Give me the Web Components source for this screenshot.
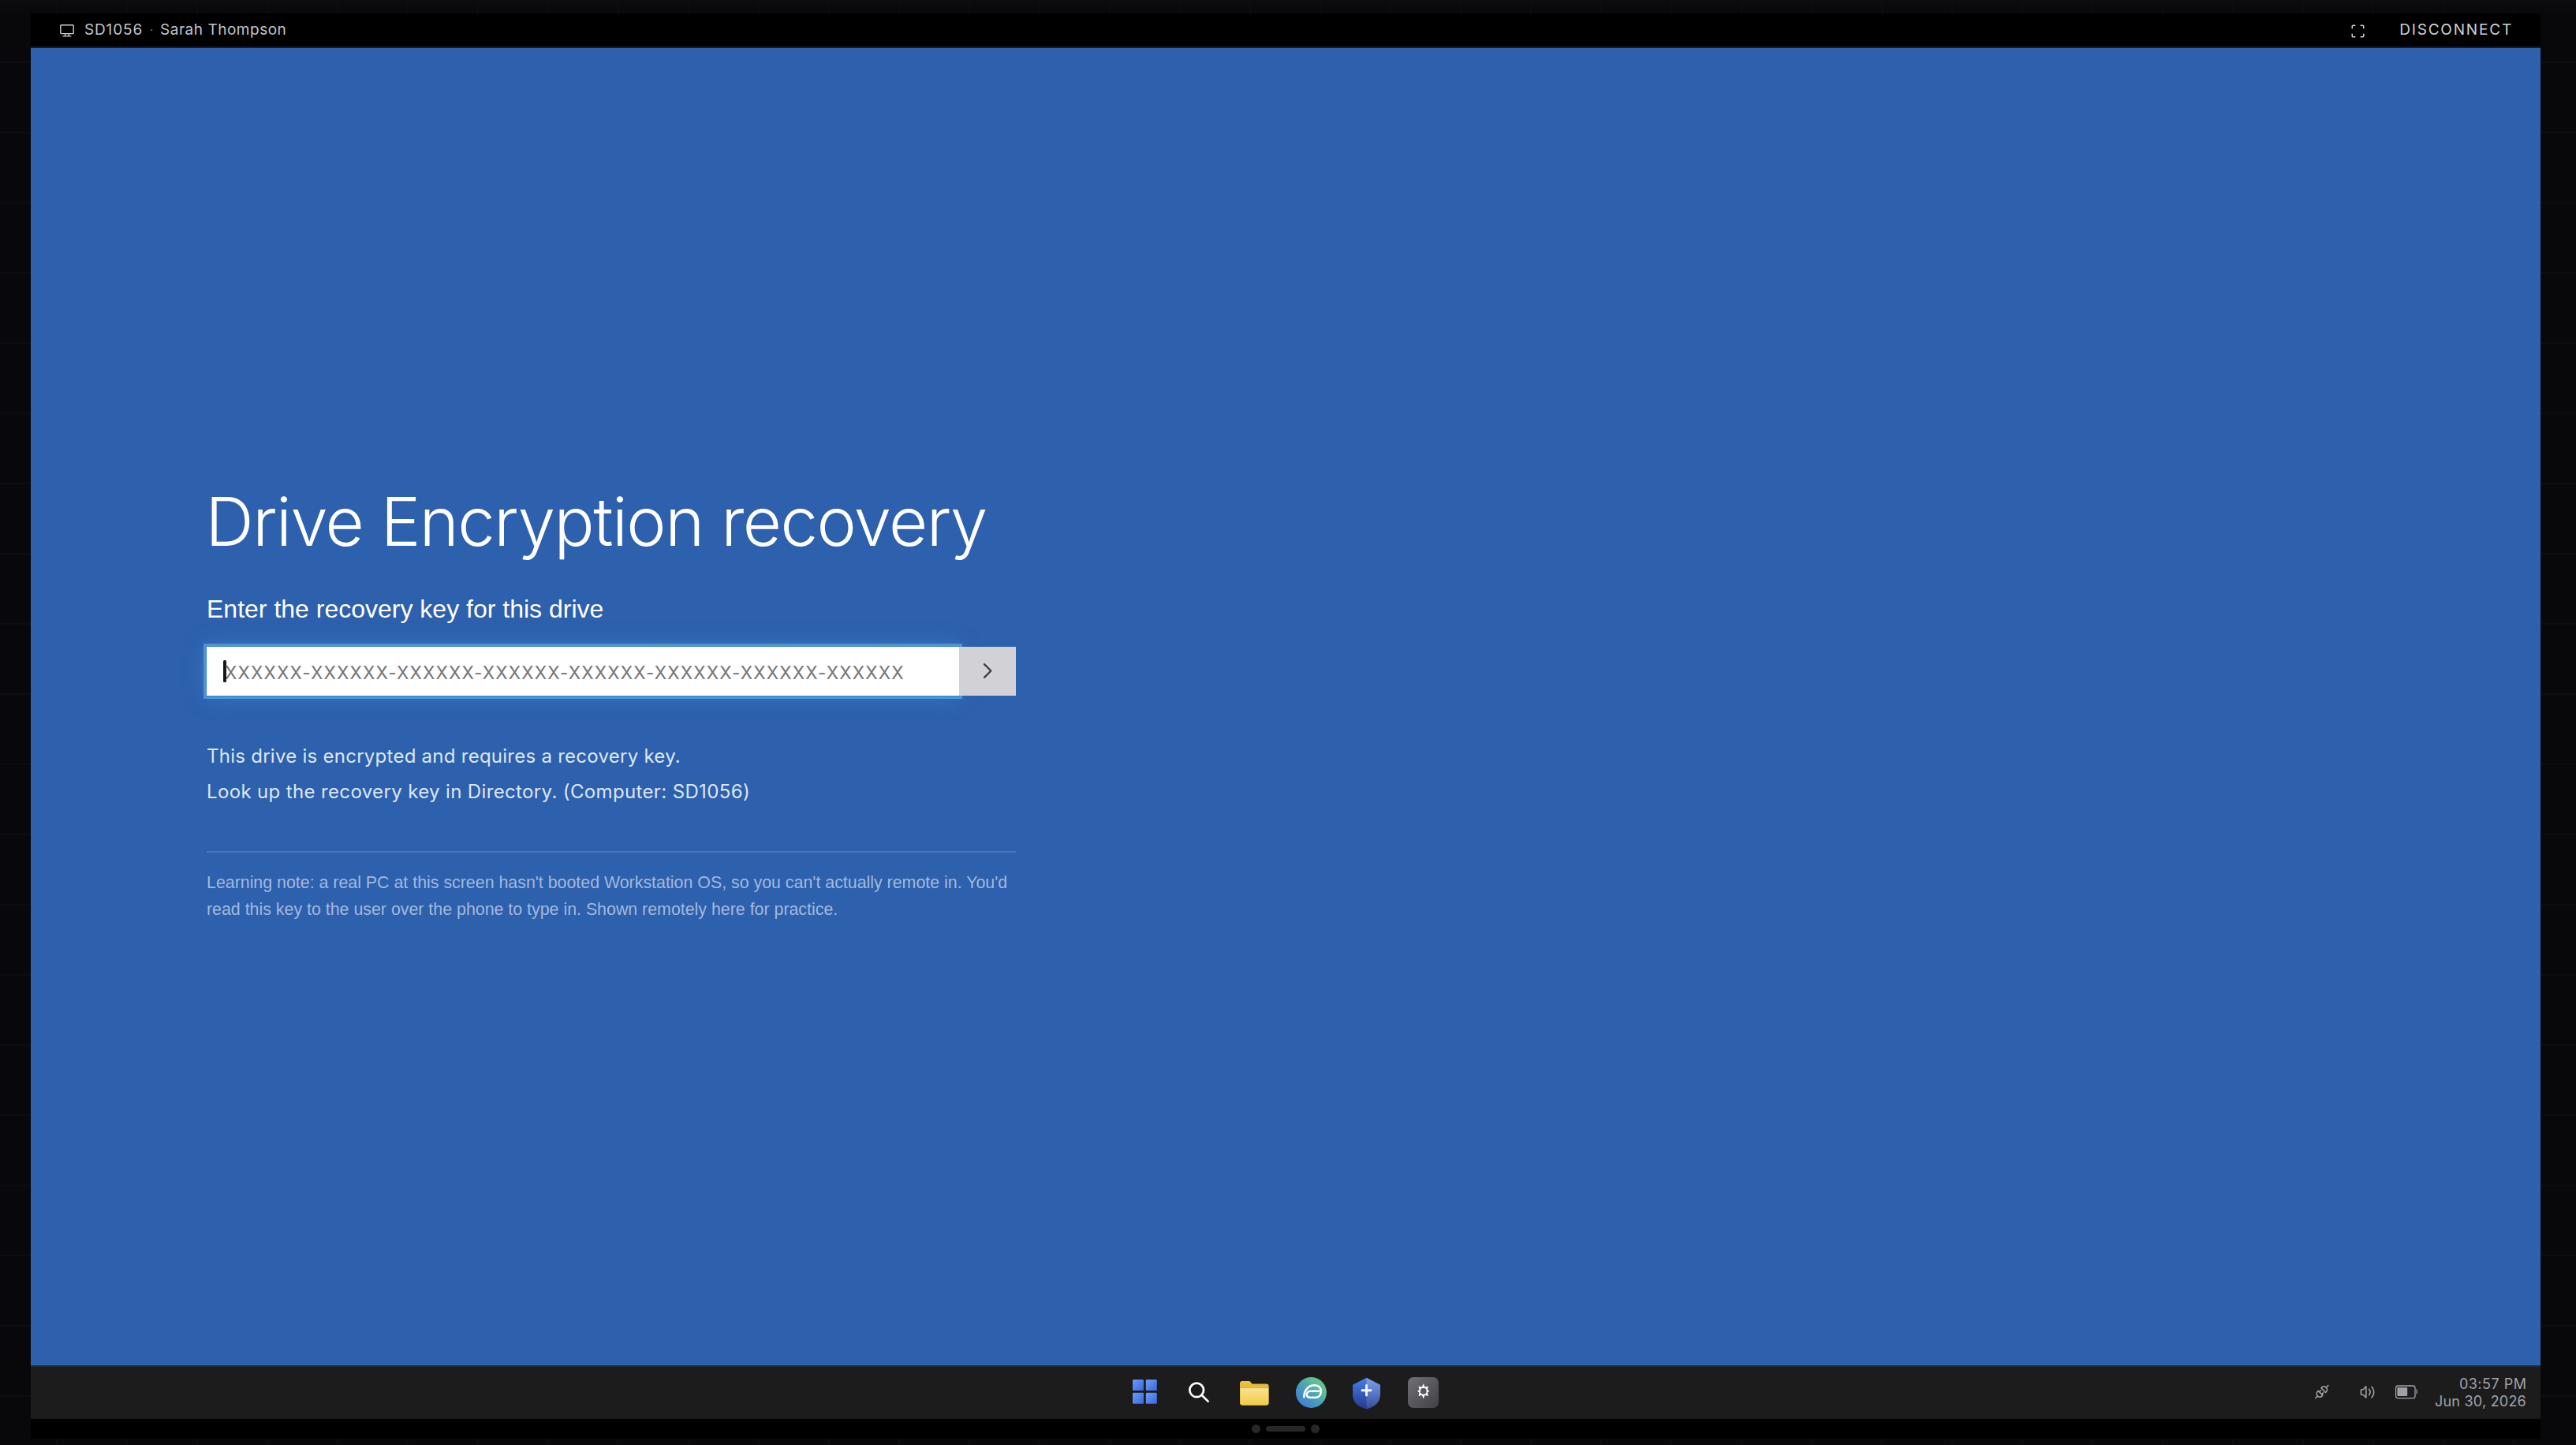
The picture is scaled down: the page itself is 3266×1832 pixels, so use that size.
<!DOCTYPE html>
<html lang="en">
<head>
<meta charset="utf-8">
<title>Remote session</title>
<style>
html,body{margin:0;height:100%;overflow:hidden;background:#08080b}
body{font-family:Inter,"Liberation Sans",sans-serif;color:#fff}
</style>
</head>
<body>
<remote-desk>
  <session-bar slot="top" computer="SD1056" person="Sarah Thompson"></session-bar>
  <recovery-screen slot="screen">
    <span slot="title">Drive Encryption recovery</span>
    <span slot="prompt">Enter the recovery key for this drive</span>
    <key-field slot="field"></key-field>
    <span slot="info1">This drive is encrypted and requires a recovery key.</span>
    <span slot="info2">Look up the recovery key in Directory. (Computer: SD1056)</span>
    <span slot="note">Learning note: a real PC at this screen hasn't booted Workstation OS, so you can't actually remote in. You'd<br>read this key to the user over the phone to type in. Shown remotely here for practice.</span>
  </recovery-screen>
  <task-bar slot="taskbar"></task-bar>
</remote-desk>
<script>
const define=(name,html)=>customElements.define(name,class extends HTMLElement{
  constructor(){
    super();
    this.attachShadow({mode:'open'}).innerHTML=html.replace(/\{(\w+)\}/g,(m,k)=>this.getAttribute(k)||'');
  }
});

define('session-bar',`
<style>
:host{display:flex;align-items:center;height:42px;box-sizing:content-box;background:#000;border-bottom:2px solid #1a1a1a;font-size:19px;line-height:38px;color:#c4c4c7;padding:0 37px;white-space:pre}
.text{height:38px}
.id{margin-left:13px;letter-spacing:.85px;width:74px}
.dot{width:22px;text-align:center;color:#71717a;font-size:16px}
.person{letter-spacing:.52px}
.full{margin-left:auto}
.off{margin-left:44px;letter-spacing:1.82px;margin-right:-2px;color:#d0d0d3}
svg{display:block;flex:none}
</style>
<svg style="margin-top:1px" width="18" height="16" viewBox="0 0 18 16" fill="none" stroke="#c9cbc9" stroke-width="1.4" stroke-linejoin="round" stroke-linecap="round"><rect x=".8" y=".8" width="16.4" height="10.8" rx=".8"/><path d="M6.6 11.8v3M11.2 11.8v3M4 14.9h9.8"/></svg>
<span class="text id">{computer}</span><span class="text dot">·</span><span class="text person">{person}</span>
<svg class="full" style="margin-top:2px" width="17" height="17" viewBox="0 0 17 17" fill="none" stroke="#d4d4d8" stroke-width="1.5" stroke-linecap="round"><path d="M1.2 4.8V2.6Q1.2 1.2 2.6 1.2H4.8M12.2 1.2h2.2q1.4 0 1.4 1.4v2.2M15.8 12.2v2.2q0 1.4-1.4 1.4h-2.2M4.8 15.8H2.6q-1.4 0-1.4-1.4v-2.2"/></svg>
<span class="text off">DISCONNECT</span>`);

define('key-field',`
<style>
:host{display:flex;width:1026px;height:62px}
.box{position:relative;width:954px;height:62px;background:#fff;box-sizing:border-box;padding:2px 0 0 23px;display:flex;align-items:center;font-size:22.5px;letter-spacing:1.15px;color:#757479;white-space:nowrap;box-shadow:0 0 0 1px #3c83ca,0 0 0 4px #4b95d8,0 0 30px rgba(72,155,225,.45)}
.caret{position:absolute;left:21px;top:17px;width:4px;height:28px;border-radius:1.5px;background:#18181b}
.go{position:relative;width:72px;height:62px;background:#d1d1d6;display:flex;align-items:center;justify-content:center}
</style>
<div class="box">XXXXXX-XXXXXX-XXXXXX-XXXXXX-XXXXXX-XXXXXX-XXXXXX-XXXXXX<i class="caret"></i></div>
<div class="go"><svg width="14" height="22" viewBox="0 0 14 22" fill="none" stroke="#3f3f43" stroke-width="2.4" stroke-linecap="round" stroke-linejoin="round"><path d="M3 2.2 11.4 10.5 3 18.8"/></svg></div>`);

define('recovery-screen',`
<style>
:host{display:block;flex:1;background:#2d60ad;box-sizing:border-box;padding:556px 0 0 223px;white-space:nowrap}
.title{font-size:85px;line-height:90px;font-weight:300;letter-spacing:-1.5px;margin-left:-1.5px}
.prompt{font:32px/40px "Liberation Sans",Arial,sans-serif;margin:45px 0 28px}
.info{font-size:24px;line-height:45px;color:#dfe7f3}
.a{margin-top:54px;letter-spacing:.26px}
.b{letter-spacing:.36px}
.note{width:1026px;margin-top:53px;border-top:2px solid #4974b8;padding-top:20.5px;font:21.36px/34px "Liberation Sans",Arial,sans-serif;color:#a3b9dc}
</style>
<div class="title"><slot name="title"></slot></div>
<div class="prompt"><slot name="prompt"></slot></div>
<slot name="field"></slot>
<div class="info a"><slot name="info1"></slot></div>
<div class="info b"><slot name="info2"></slot></div>
<div class="note"><slot name="note"></slot></div>`);

define('app-icons',`
<style>:host{display:flex;gap:11px}svg{display:block;width:60px;height:60px}</style>
<svg viewBox="1421 1735 60 60"><defs><linearGradient id="w" x1="0" y1="0" x2="1" y2="1"><stop stop-color="#6c9df5"/><stop offset="1" stop-color="#3a67e0"/></linearGradient></defs><g fill="url(#w)"><rect x="1436" y="1749" width="14" height="14" rx="1.2"/><rect x="1452.8" y="1749" width="14" height="14" rx="1.2"/><rect x="1436" y="1765.7" width="14" height="14" rx="1.2"/><rect x="1452.8" y="1765.7" width="14" height="14" rx="1.2"/></g></svg>
<svg viewBox="1492 1735 60 60" fill="none" stroke="#fff" stroke-width="2.7" stroke-linecap="round"><circle cx="1517.2" cy="1762.4" r="8.8"/><path d="M1523.6 1768.8 1531.6 1776.6"/></svg>
<svg viewBox="1563 1735 60 60"><defs><linearGradient id="f" x1="0" y1="0" x2="0" y2="1"><stop stop-color="#f7e291"/><stop offset="1" stop-color="#f2cb45"/></linearGradient><linearGradient id="k" x1="0" y1="0" x2="0" y2="1"><stop stop-color="#f0c541"/><stop offset=".32" stop-color="#e0b33a"/></linearGradient></defs><path fill="url(#k)" d="M1572 1754q0-3 3-3h8.200q1.500 0 2.500 1.200l1.800 2.300h18q3.200 0 3.200 3.200v20.600q0 3.400-3.200 3.400h-30.300q-3.200 0-3.200-3.400z"/><path fill="url(#f)" d="M1572.500 1760h35.700v18.200q0 3-3 3h-29.700q-3 0-3-3z"/></svg>
<svg viewBox="1634 1735 60 60"><defs><linearGradient id="e" x1="0" y1="1" x2=".85" y2=".1"><stop offset=".1" stop-color="#3d7bd6"/><stop offset=".5" stop-color="#489dbb"/><stop offset=".85" stop-color="#62c092"/></linearGradient></defs><circle cx="1662.400" cy="1765.500" r="19.500" fill="url(#e)"/><path fill="none" stroke="#fff" stroke-width="2.500" stroke-linecap="round" d="M1653.300 1771.200C1653.300 1762 1659.500 1756.300 1666.500 1756.300C1672.300 1756.300 1674.800 1760 1674.800 1764C1674.800 1768.500 1672 1771.800 1667.800 1771.800H1661.500C1658 1771.800 1656.800 1769.800 1656.800 1768C1656.800 1765.500 1659 1763.800 1661.500 1763.800H1671.800"/></svg>
<svg viewBox="1705 1735 60 60"><defs><linearGradient id="s" x1="0" y1="0" x2="0" y2="1"><stop stop-color="#487de8"/><stop offset="1" stop-color="#233b8c"/></linearGradient><linearGradient id="t" x1="0" y1="0" x2="0" y2="1"><stop stop-color="#fff" stop-opacity=".27"/><stop offset="1" stop-color="#fff" stop-opacity=".08"/></linearGradient></defs><path fill="url(#s)" d="M1732.500 1746.800 1750 1755.800V1768C1750 1778 1742.500 1784.500 1732.500 1786.200C1722.500 1784.500 1715 1778 1715 1768V1755.800z"/><path fill="url(#t)" d="M1732.500 1746.800 1750 1755.800V1768C1750 1778 1742.500 1784.500 1732.500 1786.200z"/><path stroke="#f3f6ff" stroke-width="2.900" stroke-linecap="round" d="M1732.500 1756.500v12.600M1727 1762.700h11"/></svg>
<svg viewBox="1776 1735 60 60"><defs><linearGradient id="g" x1="0" y1="0" x2="1" y2="1"><stop stop-color="#707077"/><stop offset="1" stop-color="#404045"/></linearGradient></defs><rect x="1785" y="1746" width="39" height="39" rx="7" fill="url(#g)"/><g transform="translate(1804.700 1763.700)" fill="#fff"><path fill-rule="evenodd" d="M0-9.500 1.900-5.100 6.200-6.300 5.100-1.900 7.600 0 5.100 1.900 6.200 6.300 1.900 5.100 0 9.500-1.900 5.100-6.200 6.300-5.100 1.900-7.600 0-5.100-1.900-6.200-6.300-1.900-5.100zM0-3.900A3.900 3.900 0 1 0 0 3.900A3.900 3.900 0 1 0 0-3.900z"/></g></svg>`);

define('system-tray',`
<style>
:host{display:flex;align-items:center;justify-content:flex-end;color:#a1a1aa;font-size:18px;line-height:22px;text-align:right}
svg{display:block;flex:none}
.clock{width:138px;height:44px;margin-top:1px}
.time{letter-spacing:.5px;margin-right:-.5px}.date{letter-spacing:.22px}
</style>
<svg width="130" height="40" viewBox="2935 1745 130 40" fill="none" stroke="#a1a1aa" stroke-width="1.600" stroke-linecap="round" stroke-linejoin="round">
<g transform="translate(2943.800 1764.500) rotate(-45)" stroke-width="1.600"><path d="M-11.300 0H-7.500M-2.500-4H-4A3.600 4 0 0 0-4 4H-2.500zM-2.500-2.200H.3M-2.500 2.200H.3M2.800-4H4A3.600 4 0 0 1 4 4H2.800zM7.500 0H11.300"/></g>
<path d="M2999.800 1757.800V1772L2996 1768.200H2994.200Q2993.400 1768.200 2993.400 1767.400V1762.600Q2993.400 1761.800 2994.200 1761.800H2996zM3003.600 1761.200Q3006.600 1764.800 3003.600 1768.600M3007 1758.200Q3012.600 1764.800 3007 1771.800"/>
<rect x="3037.600" y="1757" width="24.400" height="15.600" rx="2.600" stroke-width="1.300"/><rect x="3039.400" y="1759" width="12.800" height="11" rx="1" fill="#a1a1aa" stroke="none"/><path d="M3062.600 1761.300h1.400q1 0 1 1v4q0 1-1 1h-1.400z" fill="#6a6a70" stroke="none"/></svg>
<div class="clock"><div class="time">03:57 PM</div><div class="date">Jun 30, 2026</div></div>`);

define('task-bar',`
<style>
:host{display:grid;grid-template-columns:1382px 415px 1fr;height:64px;background:#1c1c1c;border-top:2px solid #272728;border-bottom:2px solid #191919;box-sizing:content-box}
app-icons{grid-column:2;margin-top:2px;height:60px}
system-tray{grid-column:3;padding-right:18px}
</style>
<app-icons></app-icons><system-tray></system-tray>`);

define('remote-desk',`
<style>
:host{display:flex;box-sizing:border-box;width:3266px;height:1832px;padding:17px 45px 7px 39px;border-bottom:1px solid #10040a;
background:
repeating-linear-gradient(90deg,transparent 0 71px,#0d0d10 71px 73px,transparent 73px 89px),
repeating-linear-gradient(180deg,transparent 0 78px,#0d0d10 78px 80px,transparent 80px 89px),
linear-gradient(180deg,#0b0c0e 0,#08080b 17px)}
.frame{display:flex;flex-direction:column;flex:1;background:#000}
.foot{height:25px;display:flex;align-items:center;justify-content:center;gap:7px}
.foot i{width:11px;height:11px;border-radius:6px;background:#27272a}
.foot .pill{width:50px;height:7px}
</style>
<div class="frame"><slot name="top"></slot><slot name="screen"></slot><slot name="taskbar"></slot>
<div class="foot"><i></i><i class="pill"></i><i></i></div></div>`);
</script>
</body>
</html>
